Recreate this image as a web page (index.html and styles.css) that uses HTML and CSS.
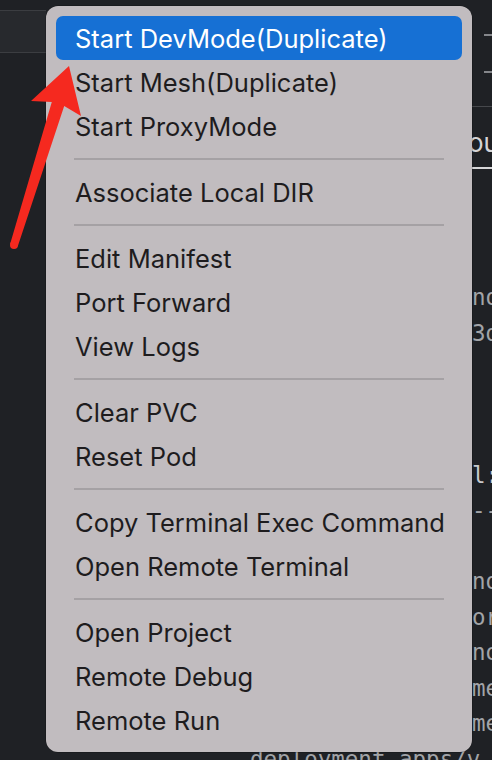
FILE: index.html
```html
<!DOCTYPE html>
<html>
<head>
<meta charset="utf-8">
<link rel="stylesheet" href="styles.css">
</head>
<body>
<div class="screen">
  <div class="editor">
    <div class="gutter"><div class="tab-strip"></div></div>
    <div class="main">
      <div class="dash dash-1"></div>
      <div class="dash dash-2"></div>
      <div class="rule"></div>
      <div class="tab-label">ou</div>
      <div class="rule rule-active"></div>
      <div class="code">
        <div class="ln">nq</div>
        <div class="ln">3d</div>
        <div class="ln"></div>
        <div class="ln"></div>
        <div class="ln"></div>
        <div class="ln ln-bright">l:</div>
        <div class="ln">---</div>
        <div class="ln"></div>
        <div class="ln">nq</div>
        <div class="ln">or</div>
        <div class="ln">no</div>
        <div class="ln">me</div>
        <div class="ln">me</div>
        <div class="ln ln-deploy">deployment.apps/v</div>
      </div>
    </div>
  </div>

  <div class="menu">
    <div class="item item-active">Start DevMode(Duplicate)</div>
    <div class="item">Start Mesh(Duplicate)</div>
    <div class="item">Start ProxyMode</div>
    <div class="sep"></div>
    <div class="item">Associate Local DIR</div>
    <div class="sep"></div>
    <div class="item">Edit Manifest</div>
    <div class="item">Port Forward</div>
    <div class="item">View Logs</div>
    <div class="sep"></div>
    <div class="item">Clear PVC</div>
    <div class="item">Reset Pod</div>
    <div class="sep"></div>
    <div class="item">Copy Terminal Exec Command</div>
    <div class="item">Open Remote Terminal</div>
    <div class="sep"></div>
    <div class="item">Open Project</div>
    <div class="item">Remote Debug</div>
    <div class="item">Remote Run</div>
  </div>

  <svg class="arrow" width="492" height="760" viewBox="0 0 492 760">
    <polygon points="69,66 81,116 64.2,105.9 17.8,246.2 10.2,243.8 51.8,102.1 31,101" fill="#f5291f"/>
    <circle cx="14" cy="245" r="4" fill="#f5291f"/>
  </svg>
</div>
</body>
</html>
```

FILE: styles.css
```css
html, body {
  margin: 0;
  padding: 0;
}
body {
  background: #1f2125;
  width: 492px;
  height: 760px;
  overflow: hidden;
}
.screen {
  position: relative;
  width: 492px;
  height: 760px;
  overflow: hidden;
}
.editor {
  display: flex;
  height: 760px;
}
.gutter {
  width: 46px;
  flex: none;
}
.tab-strip {
  margin-top: 10px;
  height: 41px;
  background: #27292d;
  border-top: 1px solid #3b3d41;
  border-bottom: 1px solid #3b3d41;
}
.main {
  flex: 1;
  min-width: 0;
  overflow: hidden;
}
.dash {
  margin-left: auto;
  width: 8px;
  height: 2px;
  background: #85878b;
}
.dash-1 { margin-top: 34px; }
.dash-2 { margin-top: 35px; }
.rule {
  margin-left: 426px;
  height: 1px;
  background: #46484c;
  margin-top: 33px;
}
.tab-label {
  margin-top: 18px;
  padding-left: 422px;
  height: 36px;
  line-height: 36px;
  font-family: Inter, "Noto Sans", sans-serif;
  font-size: 26px;
  color: #d4d4d6;
  white-space: nowrap;
}
.rule-active {
  margin-top: 6px;
  height: 2px;
  background: #d6d6d8;
}
.code {
  margin-top: 111px;
  font-family: "DejaVu Sans Mono", monospace;
  font-size: 22.5px;
  line-height: 35.5px;
  color: #a2a4a8;
}
.ln {
  padding-left: 426px;
  height: 35.5px;
  white-space: pre;
}
.ln-bright { color: #c6c8cc; }
.ln-deploy { padding-left: 204px; }

.menu {
  position: absolute;
  left: 46px;
  top: 6px;
  width: 426px;
  box-sizing: border-box;
  padding: 10px;
  background: #c1bcbf;
  border-radius: 12px;
  box-shadow: 0 0 0 0.5px rgba(0, 0, 0, 0.35);
  font-family: Inter, "Noto Sans", sans-serif;
  font-size: 25.5px;
  color: #1e1c1e;
}
.item {
  height: 44px;
  display: flex;
  align-items: center;
  padding-left: 19px;
  border-radius: 7px;
  white-space: nowrap;
}
.item-active {
  background: #1670d4;
  color: #ffffff;
}
.sep {
  height: 22px;
  display: flex;
  align-items: center;
  padding: 0 18px;
}
.sep::before {
  content: "";
  flex: 1;
  height: 2px;
  background: #a5a1a4;
}
.arrow {
  position: absolute;
  left: 0;
  top: 0;
  pointer-events: none;
}
```
